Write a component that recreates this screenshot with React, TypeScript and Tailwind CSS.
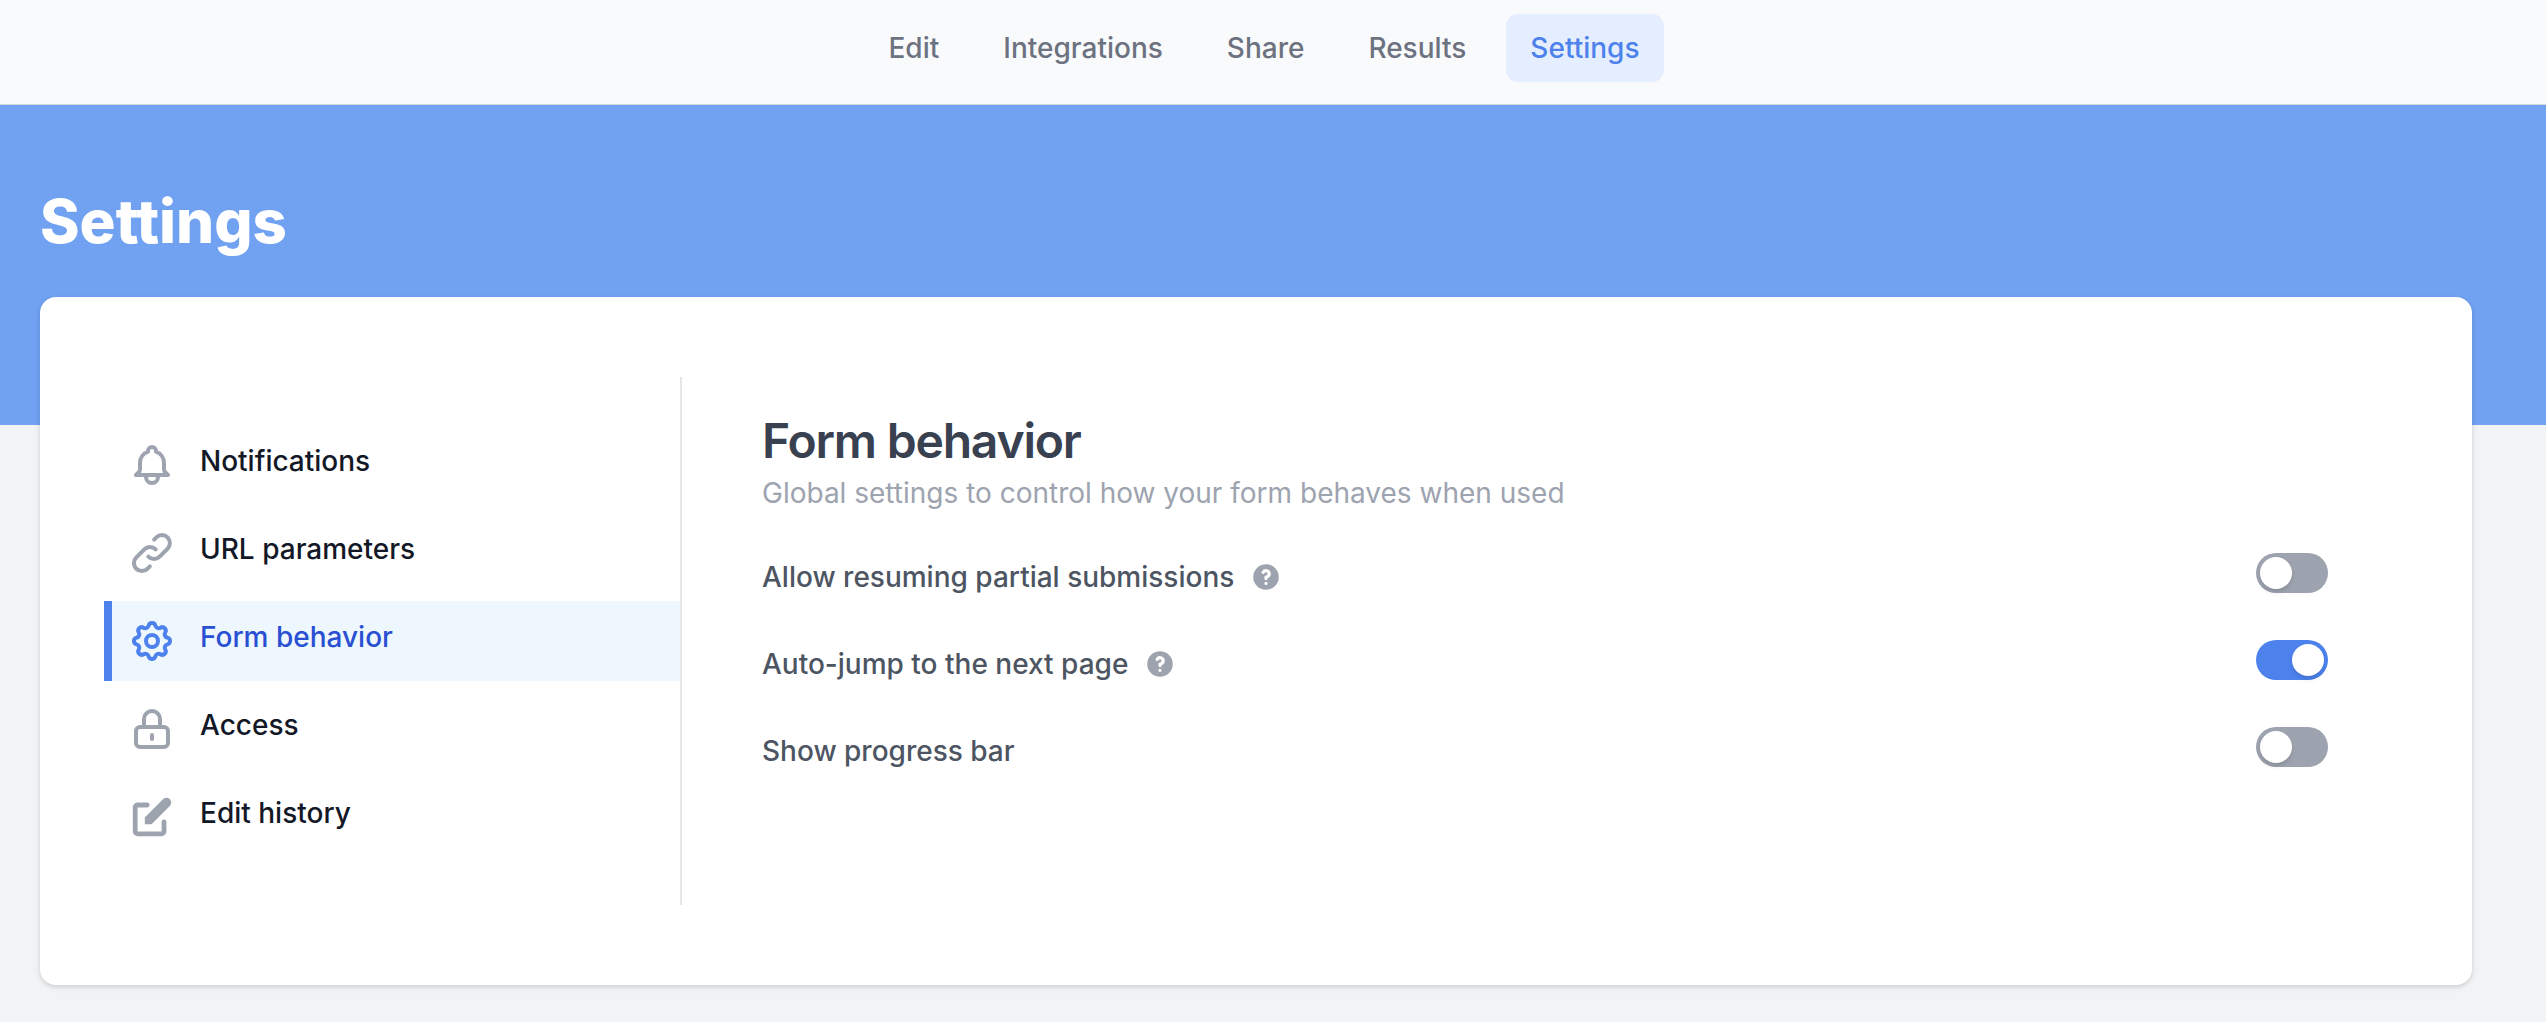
import { useState } from "react";
import type { IconType } from "react-icons";
import {
  HiOutlineBell,
  HiOutlineCog,
  HiOutlineLink,
  HiOutlineLockClosed,
  HiPencilAlt,
  HiQuestionMarkCircle,
} from "react-icons/hi";

const tabs = ["Edit", "Integrations", "Share", "Results", "Settings"];

const sections: { label: string; icon: IconType }[] = [
  { label: "Notifications", icon: HiOutlineBell },
  { label: "URL parameters", icon: HiOutlineLink },
  { label: "Form behavior", icon: HiOutlineCog },
  { label: "Access", icon: HiOutlineLockClosed },
  { label: "Edit history", icon: HiPencilAlt },
];

function TopNav() {
  return (
    <header className="border-b border-[#d3d5d8] bg-[#f9fafc]">
      <nav aria-label="Form" className="flex justify-center gap-4 pt-3.5 pr-[18px] pb-[22px]">
        {tabs.map((tab) => (
          <a
            key={tab}
            href={"#" + tab.toLowerCase()}
            aria-current={tab === "Settings" ? "page" : undefined}
            className={
              tab === "Settings"
                ? "rounded-xl bg-[#e5eefe] px-6 py-3.5 text-[28px] leading-10 font-medium text-[#4d82ed]"
                : "rounded-xl px-6 py-3.5 text-[28px] leading-10 font-medium text-[#6c727f]"
            }
          >
            {tab}
          </a>
        ))}
      </nav>
    </header>
  );
}

function Sidebar({ active, onSelect }: { active: string; onSelect: (label: string) => void }) {
  return (
    <nav aria-label="Settings sections" className="flex w-1/4 shrink-0 flex-col gap-2 py-12">
      {sections.map(({ label, icon: Icon }) => {
        const selected = label === active;
        return (
          <button
            key={label}
            type="button"
            onClick={() => onSelect(label)}
            className={
              selected
                ? "flex items-start gap-6 border-l-8 border-[#4d82ed] bg-[#eef6fe] p-4 text-left text-[#2950d2]"
                : "flex items-start gap-6 border-l-8 border-transparent p-4 text-left text-[#131827]"
            }
          >
            <Icon className={selected ? "size-12 text-[#4d82ed]" : "size-12 text-[#9da3af]"} />
            <span className="text-[28px] leading-10 font-medium">{label}</span>
          </button>
        );
      })}
    </nav>
  );
}

function ToggleRow({ id, label, help, initial }: { id: string; label: string; help?: boolean; initial: boolean }) {
  const [on, setOn] = useState(initial);
  return (
    <div className="flex h-11 justify-between">
      <div className="flex items-center gap-4 self-end">
        <label htmlFor={id} className="text-[28px] leading-10 font-medium text-[#4d5562]">
          {label}
        </label>
        {help && (
          <button type="button" aria-label={"Help: " + label}>
            <HiQuestionMarkCircle className="size-8 text-[#9da3af]" />
          </button>
        )}
      </div>
      <button
        id={id}
        type="button"
        role="switch"
        aria-checked={on}
        onClick={() => setOn(!on)}
        className={
          on
            ? "flex h-10 w-[72px] justify-end self-start rounded-full bg-[#4d82ed] p-1"
            : "flex h-10 w-[72px] justify-start self-start rounded-full bg-[#9da3af] p-1"
        }
      >
        <span className="size-8 rounded-full bg-white shadow-md" />
      </button>
    </div>
  );
}

export default function App() {
  const [active, setActive] = useState("Form behavior");
  return (
    <div className="min-h-screen bg-[#f2f3f5] font-['Inter',sans-serif]">
      <TopNav />
      <div className="bg-[#71a2f2] px-10 pt-20 pb-42">
        <h1 className="text-[60px] leading-[72px] font-extrabold text-white">Settings</h1>
      </div>
      <main className="-mt-32 pr-[74px] pl-10">
        <div className="flex rounded-2xl bg-white px-16 py-20 shadow-[0_2px_6px_rgba(0,0,0,0.1),0_2px_4px_rgba(0,0,0,0.06)]">
          <Sidebar active={active} onSelect={setActive} />
          <section className="flex-1 border-l-2 border-[#e5e7eb] px-20 pt-8">
            <h2 className="text-[48px] leading-16 font-semibold tracking-tight text-[#394150]">Form behavior</h2>
            <p className="text-[28px] leading-10 text-[#9da3af]">
              Global settings to control how your form behaves when used
            </p>
            <div className="mt-10 flex flex-col gap-[43px]">
              <ToggleRow id="resume" label="Allow resuming partial submissions" help initial={false} />
              <ToggleRow id="auto-jump" label="Auto-jump to the next page" help initial={true} />
              <ToggleRow id="progress" label="Show progress bar" initial={false} />
            </div>
          </section>
        </div>
      </main>
    </div>
  );
}
